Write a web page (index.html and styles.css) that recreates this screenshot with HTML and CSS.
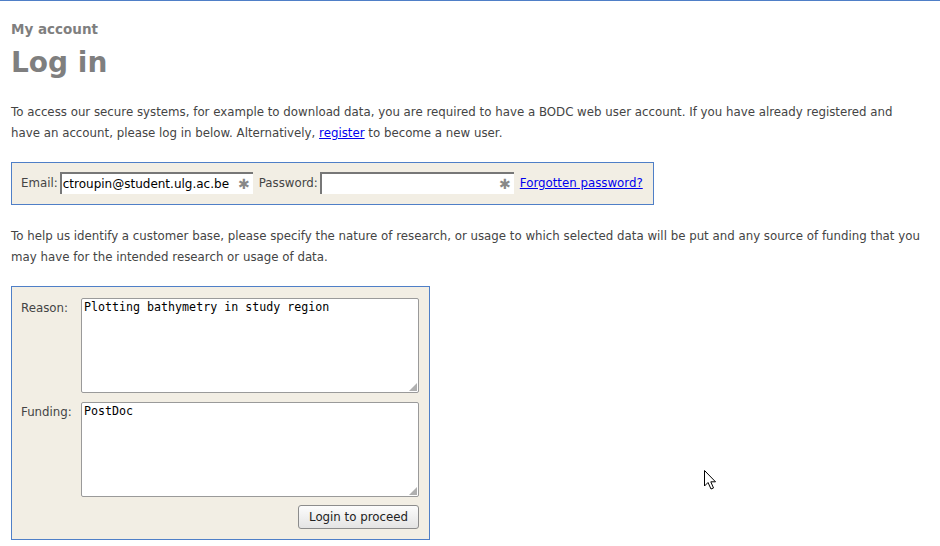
FILE: index.html
```html
<!DOCTYPE html>
<html>
<head>
<meta charset="utf-8">
<link rel="stylesheet" href="styles.css">
</head>
<body>
<div class="page">
  <h2 class="subtitle">My account</h2>
  <h1 class="title">Log in</h1>
  <p class="intro intro-first">To access our secure systems, for example to download data, you are required to have a BODC web user account. If you have already registered and have an account, please log in below. Alternatively, <a href="#">register</a> to become a new user.</p>
  <div class="box login-box">
    <label class="lbl">Email:</label>
    <span class="field field-email"><span class="value">ctroupin@student.ulg.ac.be</span><span class="req">✱</span></span>
    <label class="lbl">Password:</label>
    <span class="field field-pass"><span class="value"></span><span class="req">✱</span></span>
    <a href="#" class="forgot">Forgotten password?</a>
  </div>
  <p class="intro">To help us identify a customer base, please specify the nature of research, or usage to which selected data will be put and any source of funding that you may have for the intended research or usage of data.</p>
  <div class="box reason-box">
    <div class="row">
      <label class="lbl2">Reason:</label>
      <div class="textarea">Plotting bathymetry in study region<span class="grip"></span></div>
    </div>
    <div class="row">
      <label class="lbl2">Funding:</label>
      <div class="textarea">PostDoc<span class="grip"></span></div>
    </div>
    <div class="actions">
      <button class="btn">Login to proceed</button>
    </div>
  </div>
</div>
<svg class="cursor" width="14" height="22" viewBox="0 0 14 22"><path d="M0.5 0.5 L0.5 16 L4 12.5 L7 19 L9.5 18 L6.8 11.8 L11.5 11.8 Z" fill="#fff" stroke="#000" stroke-width="1"/></svg>
</body>
</html>
```
FILE: styles.css
```css
html, body { margin: 0; padding: 0; background: #fff; }
body {
  border-top: 1px solid #4f7fc7;
  font-family: "DejaVu Sans", Verdana, sans-serif;
  font-size: 11.8px;
  color: #444;
  position: relative;
  height: 545px;
  overflow: hidden;
}
.page { padding: 0 11px; }
.subtitle {
  margin: 0;
  padding-top: 20px;
  font-size: 13.5px;
  font-weight: bold;
  color: #7f7f7f;
  line-height: 16px;
}
.title {
  margin: 9px 0 0;
  font-size: 28px;
  font-weight: bold;
  color: #7f7f7f;
  line-height: 33px;
}
.intro {
  margin: 0;
  line-height: 21px;
}
.intro-first { margin-top: 23px; max-width: 900px; }
a { color: #0000ee; }
.box {
  background: #f2eee4;
  border: 1px solid #4f7fc7;
}
.login-box {
  display: inline-flex;
  align-items: center;
  margin: 18px 0 21px;
  padding: 9px 10px 10px 9px;
  height: 22px;
}
.lbl { margin-right: 2px; }
.field {
  display: inline-flex;
  align-items: center;
  justify-content: space-between;
  background: #fff;
  height: 20px;
  border-top: 2px solid #777;
  border-left: 2px solid #777;
  font-size: 12px;
  color: #000;
  box-sizing: content-box;
  margin-right: 6px;
}
.field-email { width: 191px; }
.field-pass { width: 192px; margin-right: 6px; }
.value { padding-left: 1px; }
.req { color: #888; font-size: 14px; padding-right: 3px; font-weight: bold; }
.reason-box {
  width: 398px;
  margin-top: 18px;
  padding: 11px 10px 10px 9px;
}
.row { display: flex; margin-bottom: 9px; }
.lbl2 { width: 60px; padding-top: 3px; }
.textarea {
  position: relative;
  flex: 1;
  border: 1px solid #9a9a9a;
  border-radius: 2px;
  background: #fff;
  font-family: "DejaVu Sans Mono", monospace;
  font-size: 11.65px;
  line-height: 15px;
  color: #000;
  padding: 1px 2px;
  box-sizing: border-box;
  height: 95px;
}
.grip {
  position: absolute;
  right: 1px; bottom: 1px;
  width: 8px; height: 8px;
  background: radial-gradient(circle, #aaa 0.7px, transparent 0.8px) 0 0 / 2px 2px;
  clip-path: polygon(100% 0, 100% 100%, 0 100%);
}
.actions { display: flex; justify-content: flex-end; margin-top: -1px; }
.btn {
  font-family: "DejaVu Sans", sans-serif;
  font-size: 11.8px;
  color: #222;
  height: 24px;
  width: 121px;
  border: 1px solid #8c8c8c;
  border-radius: 3px;
  background: linear-gradient(#fcfcfc, #e4e4e4);
  padding: 0;
}
.cursor { position: absolute; left: 704px; top: 469px; }
```
